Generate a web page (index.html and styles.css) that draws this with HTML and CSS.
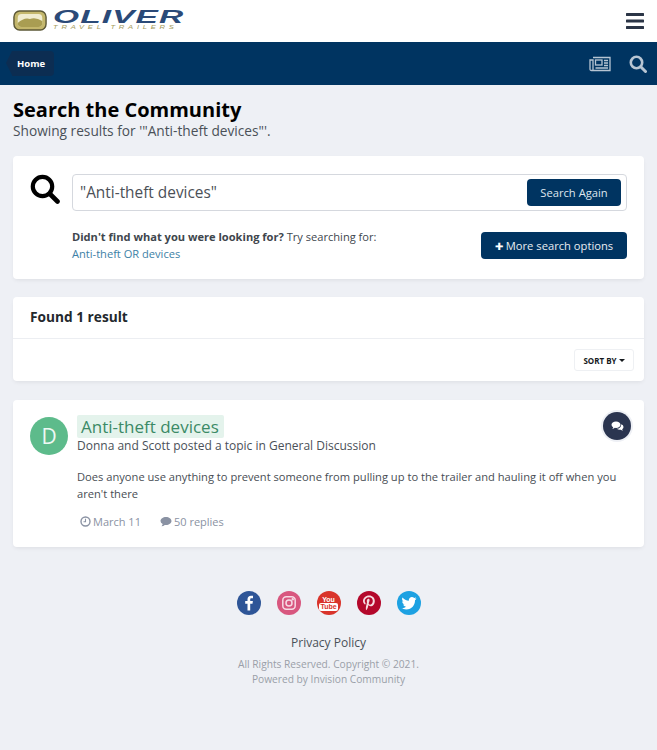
FILE: index.html
```html
<!DOCTYPE html>
<html lang="en">
<head>
  <meta charset="UTF-8">
  <meta name="viewport" content="width=device-width, initial-scale=1.0">
  <title>Search the Community</title>
  <link rel="stylesheet" href="styles.css">
</head>
<body>
  <header class="site-header">
    <div class="logo">
      <svg class="logo-badge" width="34" height="21" viewBox="0 0 36 21" preserveAspectRatio="none">
        <rect x="1" y="1" width="34" height="19" rx="6" fill="#c4b76c" stroke="#5c5836" stroke-width="1.5"/>
        <rect x="5" y="4" width="26" height="13" rx="4" fill="#f0ecd0"/>
        <path d="M5 13 Q12 7 18 9 Q24 7 31 11 V13 Q31 17 27 17 H9 Q5 17 5 13Z" fill="#a99d52"/>
      </svg>
      <div class="logo-text">
        <span class="logo-name">OLIVER</span>
        <span class="logo-sub">TRAVEL TRAILERS</span>
      </div>
    </div>
    <svg class="burger" width="18" height="16" viewBox="0 0 18 16">
      <path d="M1 1.5H17M1 8H17M1 14.500H17" stroke="#2b3546" stroke-width="3" stroke-linecap="round"/>
    </svg>
  </header>

  <nav class="site-nav">
    <a class="crumb">Home</a>
    <div class="nav-icons">
      <svg width="22" height="16" viewBox="0 0 22 16" fill="none" stroke="#b7c5d3" stroke-width="1.3">
        <path d="M4 1.500H21V14.500H2.500Q1 14.500 1 13V4H4V14"/>
        <rect x="6.500" y="4" width="6.500" height="5"/>
        <path d="M15 4.500H19M15 7H19M15 9.500H19M6.500 12H19"/>
      </svg>
      <svg width="18" height="18" viewBox="0 0 18 18" fill="none" stroke="#b7c5d3">
        <circle cx="7.500" cy="7.500" r="5.700" stroke-width="2.600"/>
        <path d="M12 12L16.500 16.500" stroke-width="3" stroke-linecap="round"/>
      </svg>
    </div>
  </nav>

  <main class="page">
    <h1 class="page-title">Search the Community</h1>
    <p class="page-sub">Showing results for '"Anti-theft devices"'.</p>

    <section class="card search-card">
      <svg class="search-icon" width="30" height="30" viewBox="0 0 30 30" fill="none" stroke="#000">
        <circle cx="12.500" cy="12.500" r="9.700" stroke-width="4.200"/>
        <path d="M20 20L27.500 27.500" stroke-width="4.600" stroke-linecap="round"/>
      </svg>
      <div class="search-main">
        <div class="search-box">
          <span class="search-value">"Anti-theft devices"</span>
          <button class="btn btn-again">Search Again</button>
        </div>
        <div class="search-hints">
          <div class="hint-text">
            <p><strong>Didn't find what you were looking for?</strong> Try searching for:</p>
            <a class="hint-link">Anti-theft OR devices</a>
          </div>
          <button class="btn btn-more"><span class="plus">&#10010;</span> More search options</button>
        </div>
      </div>
    </section>

    <section class="card results-card">
      <h2 class="results-count">Found 1 result</h2>
      <div class="results-sort">
        <button class="sort-btn">SORT BY <span class="caret"></span></button>
      </div>
    </section>

    <section class="card result">
      <div class="avatar">D</div>
      <div class="result-body">
        <h3 class="result-title"><mark>Anti-theft devices</mark></h3>
        <p class="result-by">Donna and Scott posted a topic in General Discussion</p>
        <p class="result-text">Does anyone use anything to prevent someone from pulling up to the trailer and hauling it off when you aren't there</p>
        <div class="result-meta">
          <span class="meta-item">
            <svg width="11" height="11" viewBox="0 0 11 11" fill="none" stroke="#8a92a3" stroke-width="1.400">
              <circle cx="5.500" cy="5.500" r="4.500"/>
              <path d="M5.500 2.800V5.800H3.500" stroke-width="1.100"/>
            </svg>
            March 11
          </span>
          <span class="meta-item">
            <svg width="12" height="11" viewBox="0 0 12 11" fill="#8a92a3">
              <path d="M6 1C9 1 11.500 2.800 11.500 5S9 9 6 9Q5.400 9 4.800 8.900Q3.500 10 1.500 10.200Q2.600 9.200 2.700 8.100Q.5 7 .5 5C.5 2.800 3 1 6 1Z"/>
            </svg>
            50 replies
          </span>
        </div>
      </div>
      <div class="topic-badge">
        <svg width="13" height="11" viewBox="0 0 13 11" fill="#fff">
          <path d="M5 .5C7.600 .5 9.500 1.900 9.500 3.700S7.600 6.900 5 6.900Q4.400 6.900 3.900 6.800Q2.900 7.700 1.300 7.900Q2.100 7.100 2.200 6.300Q.5 5.300 .5 3.700C.5 1.900 2.400 .5 5 .5Z"/>
          <path d="M10.300 3.300Q12.500 4.100 12.500 6Q12.500 7.400 11.200 8.200Q11.300 9 12 9.700Q10.600 9.500 9.600 8.800Q7.400 9.100 5.800 7.800Q10 7.600 10.300 3.300Z"/>
        </svg>
      </div>
    </section>
  </main>

  <footer class="site-footer">
    <div class="socials">
      <span class="social fb">
        <svg width="24" height="24" viewBox="0 0 24 24"><path fill="#fff" d="M13.200 19.500V12.800H15.500L15.900 10.100H13.200V8.500C13.200 7.700 13.500 7.200 14.600 7.200H16V4.800C15.700 4.800 14.900 4.700 14 4.700C12 4.700 10.500 5.900 10.500 8.200V10.100H8.200V12.800H10.500V19.500Z"/></svg>
      </span>
      <span class="social ig">
        <svg width="24" height="24" viewBox="0 0 24 24" fill="none" stroke="#f6dbe5" stroke-width="1.500">
          <rect x="5.800" y="5.800" width="12.400" height="12.400" rx="3.500"/>
          <circle cx="12" cy="12" r="3"/>
          <circle cx="15.700" cy="8.300" r=".5" fill="#fff"/>
        </svg>
      </span>
      <span class="social yt">
        <span class="yt-you">You</span>
        <span class="yt-tube">Tube</span>
      </span>
      <span class="social pin">
        <svg width="24" height="24" viewBox="0 0 24 24"><path fill="#f6dbe0" d="M12.300 4.500C8.500 4.500 6 7 6 10C6 11.400 6.800 12.900 7.900 13.400C8.300 13.500 8.500 13.300 8.600 12.600C8.700 12.200 8.600 12.100 8.400 11.800C8 11.300 7.800 10.700 7.800 10C7.800 8 9.500 6.200 12.100 6.200C14.300 6.200 15.800 7.700 15.800 9.800C15.800 12.100 14.700 13.700 13.100 13.700C12.200 13.700 11.500 13 11.800 12.100C12.100 11 12.600 9.900 12.600 9.100C12.600 8.400 12.200 7.800 11.400 7.800C10.500 7.800 9.800 8.800 9.800 10C9.800 10.800 10 11.300 10 11.300L9 15.500C8.700 16.700 9 18.600 9 19C9.100 19.200 9.300 19.200 9.400 19C9.600 18.800 10.600 17.400 10.900 16.200L11.400 14.100C11.800 14.800 12.700 15.200 13.600 15.200C16.100 15.200 17.800 12.900 17.800 9.900C17.800 6.800 15.300 4.500 12.300 4.500Z"/></svg>
      </span>
      <span class="social tw">
        <svg width="24" height="24" viewBox="0 0 24 24"><path fill="#fff" d="M19.500 7.400C19 7.700 18.400 7.800 17.800 7.900C18.400 7.500 18.900 6.900 19.100 6.200C18.500 6.600 17.800 6.800 17.200 7C16.600 6.400 15.800 6 14.900 6C13.200 6 11.800 7.400 11.800 9.100C11.800 9.400 11.900 9.600 11.900 9.800C9.300 9.700 7 8.400 5.500 6.500C5.200 7 5.100 7.500 5.100 8.100C5.100 9.200 5.600 10.100 6.500 10.700C6 10.700 5.500 10.500 5.100 10.300C5.100 11.900 6.200 13.100 7.600 13.400C7.100 13.600 6.700 13.600 6.200 13.500C6.600 14.800 7.800 15.700 9.100 15.700C7.800 16.800 6.200 17.300 4.500 17.100C5.900 18 7.500 18.500 9.200 18.500C14.900 18.500 18 13.800 18 9.700V9.300C18.600 8.900 19.100 8.200 19.500 7.400Z"/></svg>
      </span>
    </div>
    <a class="footer-link">Privacy Policy</a>
    <p class="footer-note">All Rights Reserved. Copyright &copy; 2021.</p>
    <p class="footer-note">Powered by Invision Community</p>
  </footer>
</body>
</html>
```

FILE: styles.css
```css
* {
  box-sizing: border-box;
}

body {
  margin: 0;
  font-family: "Open Sans", sans-serif;
  background: #eef0f5;
  color: #353c41;
}

p, h1, h2, h3 {
  margin: 0;
}

.site-header {
  height: 42px;
  background: #fff;
  display: flex;
  justify-content: space-between;
  align-items: center;
  padding: 0 13px 0 13px;
}

.logo {
  display: flex;
  align-items: center;
  gap: 6px;
  margin-top: -2px;
}

.logo-badge {
  display: block;
}

.logo-text {
  display: flex;
  flex-direction: column;
  width: 132px;
  font-family: "Liberation Sans", sans-serif;
  font-style: italic;
}

.logo-name {
  font-size: 18px;
  line-height: 14px;
  font-weight: 700;
  color: #2b4a78;
  letter-spacing: .6px;
  transform: scaleX(1.86);
  transform-origin: left;
}

.logo-sub {
  font-size: 6px;
  line-height: 7px;
  color: #a59b5c;
  letter-spacing: 3px;
  white-space: nowrap;
  transform: scaleX(1.26);
  transform-origin: left;
}

.burger {
  display: block;
}

.site-nav {
  height: 43px;
  background: #003461;
  display: flex;
  justify-content: space-between;
  align-items: center;
  padding: 0 10px 0 12px;
}

.crumb {
  position: relative;
  background: #0c2d52;
  color: #fff;
  font-size: 9.500px;
  font-weight: 700;
  height: 25px;
  line-height: 25px;
  padding: 0 9px 0 5px;
  border-radius: 0 4px 4px 0;
}

.crumb::before {
  content: "";
  position: absolute;
  left: -6px;
  top: 0;
  border-style: solid;
  border-width: 12.500px 6px 12.500px 0;
  border-color: transparent #0c2d52 transparent transparent;
}

.nav-icons {
  display: flex;
  align-items: center;
  gap: 18px;
}

.nav-icons svg {
  display: block;
}

.page {
  padding: 12px 13px 0;
}

.page-title {
  font-size: 20px;
  line-height: 25px;
  font-weight: 700;
  color: #000;
}

.page-sub {
  font-size: 13.700px;
  line-height: 18px;
  color: #4a5058;
}

.card {
  background: #fff;
  border-radius: 4px;
  box-shadow: 0 2px 4px -1px rgba(0, 0, 0, .08);
}

.search-card {
  margin-top: 16px;
  height: 123px;
  display: flex;
  padding: 18px 17px 0;
  gap: 12px;
}

.search-icon {
  display: block;
  flex: none;
}

.search-main {
  flex: 1;
}

.search-box {
  height: 37px;
  border: 1px solid #d5d8de;
  border-radius: 4px;
  display: flex;
  justify-content: space-between;
  align-items: center;
  padding: 0 5px 0 7px;
}

.search-value {
  font-size: 15.400px;
  color: #4b5057;
}

.btn {
  background: #003461;
  color: #dfe6ee;
  font-family: inherit;
  font-size: 11.200px;
  border: none;
  border-radius: 4px;
  height: 27px;
  padding: 0;
}

.btn-again {
  width: 94px;
}

.btn-more {
  width: 146px;
  margin-top: 4px;
  color: #e8edf2;
}

.plus {
  color: #fff;
  font-size: 10px;
}

.search-hints {
  display: flex;
  justify-content: space-between;
  align-items: flex-start;
  margin-top: 17px;
}

.hint-text {
  font-size: 11.100px;
  line-height: 17px;
  color: #40464d;
}

.hint-link {
  color: #3d7fa6;
}

.results-card {
  margin-top: 18px;
  height: 84px;
}

.results-count {
  height: 42px;
  line-height: 40px;
  padding-left: 17px;
  font-size: 13.700px;
  font-weight: 700;
  color: #23282d;
  border-bottom: 1px solid #eceef2;
}

.results-sort {
  display: flex;
  justify-content: flex-end;
  padding: 10px 10px 0;
}

.sort-btn {
  height: 22px;
  width: 60px;
  padding: 0;
  background: #fff;
  border: 1px solid #eef0f3;
  border-radius: 3px;
  font-family: inherit;
  font-size: 8px;
  font-weight: 700;
  color: #15191d;
}

.caret {
  display: inline-block;
  vertical-align: middle;
  margin-top: -1px;
  border-style: solid;
  border-width: 3px 3px 0;
  border-color: #15191d transparent transparent;
}

.result {
  position: relative;
  margin-top: 19px;
  height: 147px;
  padding: 17px 17px 0;
  display: flex;
  gap: 9px;
}

.avatar {
  flex: none;
  width: 38px;
  height: 38px;
  border-radius: 50%;
  background: #5dbb8b;
  color: #eef8f3;
  font-size: 21px;
  line-height: 38px;
  text-align: center;
}

.result-body {
  flex: 1;
}

.result-title {
  font-size: 17px;
  line-height: 20px;
  font-weight: 400;
}

.result-title mark {
  background: #e4f3ec;
  color: #3b8a66;
  padding: 0 5px 0 4px;
  border-radius: 2px;
}

.result-by {
  font-size: 12px;
  line-height: 18px;
  color: #4a5058;
}

.result-text {
  font-size: 11.150px;
  line-height: 17px;
  color: #474d54;
  margin-top: 13px;
}

.result-meta {
  display: flex;
  gap: 19px;
  margin-top: 12px;
  padding-left: 3px;
  font-size: 11px;
  color: #8a92a3;
}

.meta-item {
  display: flex;
  align-items: center;
  gap: 2px;
}

.topic-badge {
  position: absolute;
  right: 13px;
  top: 12px;
  width: 28px;
  height: 28px;
  border-radius: 50%;
  background: #2b3550;
  box-shadow: 0 0 0 2px #eef0f5;
  display: flex;
  align-items: center;
  justify-content: center;
}

.site-footer {
  margin-top: 44px;
  text-align: center;
}

.socials {
  display: flex;
  justify-content: center;
  gap: 16px;
  margin-bottom: 20px;
}

.social {
  width: 24px;
  height: 24px;
  border-radius: 50%;
  display: flex;
  flex-direction: column;
  align-items: center;
  justify-content: center;
}

.social svg {
  display: block;
}

.fb {
  background: #2e5597;
}

.ig {
  background: #d8577f;
}

.yt {
  background: #d9342b;
  color: #fff;
  font-family: "Liberation Sans", sans-serif;
  font-weight: 700;
}

.yt-you {
  font-size: 7px;
  line-height: 7px;
}

.yt-tube {
  font-size: 7px;
  line-height: 8px;
  background: #fff;
  color: #d9342b;
  border-radius: 2px;
  padding: 0 1px;
}

.pin {
  background: #b4082b;
}

.tw {
  background: #1da1e2;
}

.footer-link {
  display: block;
  font-size: 12px;
  line-height: 16px;
  color: #4a5058;
  margin-bottom: 6px;
}

.footer-note {
  font-size: 10.200px;
  line-height: 15px;
  color: #9a9fa8;
}
```
